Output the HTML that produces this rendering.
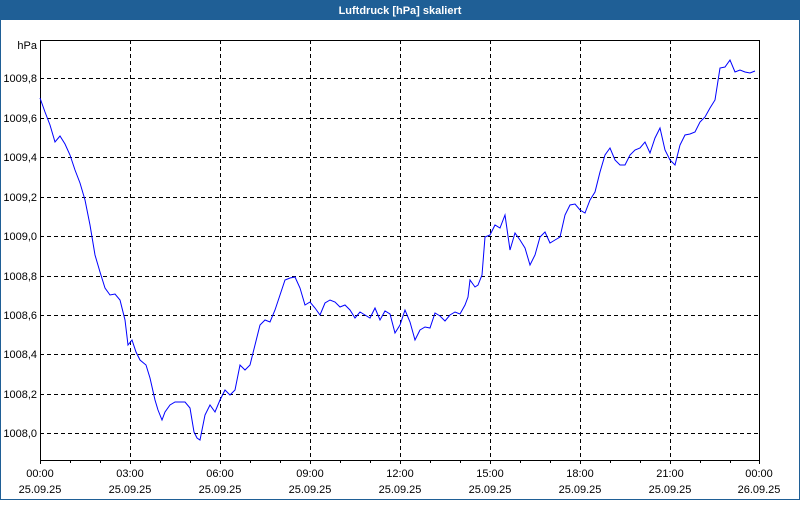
<!DOCTYPE html>
<html><head><style>
body{margin:0;width:800px;height:500px;overflow:hidden;background:#fff;font-family:"Liberation Sans",sans-serif}
</style></head><body>
<svg width="800" height="500" xmlns="http://www.w3.org/2000/svg" font-family="Liberation Sans, sans-serif" font-size="11">
<rect x="0" y="0" width="800" height="500" fill="#fff"/>
<rect x="0.5" y="0.5" width="799" height="499" fill="none" stroke="#1f5f96" stroke-width="1"/>
<rect x="0" y="0" width="800" height="20" fill="#1f5f96"/>
<text x="400" y="14" fill="#fff" font-weight="bold" text-anchor="middle">Luftdruck [hPa] skaliert</text>
<g stroke="#000" stroke-dasharray="4,3" stroke-width="1">
<path d="M130.5 40V460M220.5 40V460M310.5 40V460M400.5 40V460M490.5 40V460M580.5 40V460M670.5 40V460"/>
<path d="M40 78.5H760M40 118.5H760M40 157.5H760M40 197.5H760M40 236.5H760M40 276.5H760M40 315.5H760M40 354.5H760M40 394.5H760M40 433.5H760"/>
</g>
<path d="M40.5 460.5V40.5H759.5V460.5M40 460.5H760" fill="none" stroke="#000"/>
<path d="M40.5 460V464M70.5 460V463M100.5 460V463M130.5 460V464M160.5 460V463M190.5 460V463M220.5 460V464M250.5 460V463M280.5 460V463M310.5 460V464M340.5 460V463M370.5 460V463M400.5 460V464M430.5 460V463M460.5 460V463M490.5 460V464M520.5 460V463M550.5 460V463M580.5 460V464M610.5 460V463M640.5 460V463M670.5 460V464M700.5 460V463M730.5 460V463M759.5 460V464" stroke="#000"/>
<g text-anchor="end" fill="#000">
<text x="37" y="49">hPa</text>
<text x="37" y="82">1009,8</text><text x="37" y="122">1009,6</text><text x="37" y="161">1009,4</text><text x="37" y="201">1009,2</text><text x="37" y="240">1009,0</text><text x="37" y="280">1008,8</text><text x="37" y="319">1008,6</text><text x="37" y="358">1008,4</text><text x="37" y="398">1008,2</text><text x="37" y="437">1008,0</text>
</g>
<g text-anchor="middle" fill="#000">
<text x="40" y="477">00:00</text><text x="40" y="493">25.09.25</text>
<text x="130" y="477">03:00</text><text x="130" y="493">25.09.25</text>
<text x="220" y="477">06:00</text><text x="220" y="493">25.09.25</text>
<text x="310" y="477">09:00</text><text x="310" y="493">25.09.25</text>
<text x="400" y="477">12:00</text><text x="400" y="493">25.09.25</text>
<text x="490" y="477">15:00</text><text x="490" y="493">25.09.25</text>
<text x="580" y="477">18:00</text><text x="580" y="493">25.09.25</text>
<text x="670" y="477">21:00</text><text x="670" y="493">25.09.25</text>
<text x="759" y="477">00:00</text><text x="759" y="493">26.09.25</text>
</g>
<polyline fill="none" stroke="#0000ff" stroke-width="1" points="40,98 45,112 50,125 55,142 60,136 65,144 70,155 75,170 80,183 85,200 90,225 95,255 100,272 105,288 110,295 115,294 120,300 125,320 128,345 132,340 136,352 140,360 146,365 150,378 155,400 158,410 162,420 165,412 170,405 175,402 180,402 185,402 190,408 194,432 197,438 200,440 205,415 210,405 215,412 220,400 225,390 230,395 235,390 240,365 245,370 250,365 255,345 260,325 265,320 270,322 275,310 280,295 285,280 290,278 295,277 300,288 305,305 310,302 315,308 320,315 325,303 330,300 335,302 340,307 345,305 350,310 355,318 360,312 365,315 370,318 375,308 380,320 385,311 390,314 395,333 400,325 405,310 410,322 415,340 420,330 425,327 430,328 435,313 440,316 445,321 450,315 455,312 460,314 465,305 468,297 470,280 475,287 478,285 482,275 485,237 490,235 495,225 500,228 505,215 510,250 515,233 520,240 525,248 530,265 535,255 540,237 545,232 550,243 555,240 560,237 565,215 570,205 575,204 580,210 585,213 590,200 595,192 600,172 605,155 610,148 615,160 620,165 625,165 630,155 635,150 640,148 645,142 650,153 655,138 660,128 665,150 670,160 675,165 680,145 685,135 690,134 695,132 700,122 705,117 710,108 715,100 720,68 725,67 730,60 735,72 740,70 745,72 750,73 755,71"/>
</svg>
</body></html>
